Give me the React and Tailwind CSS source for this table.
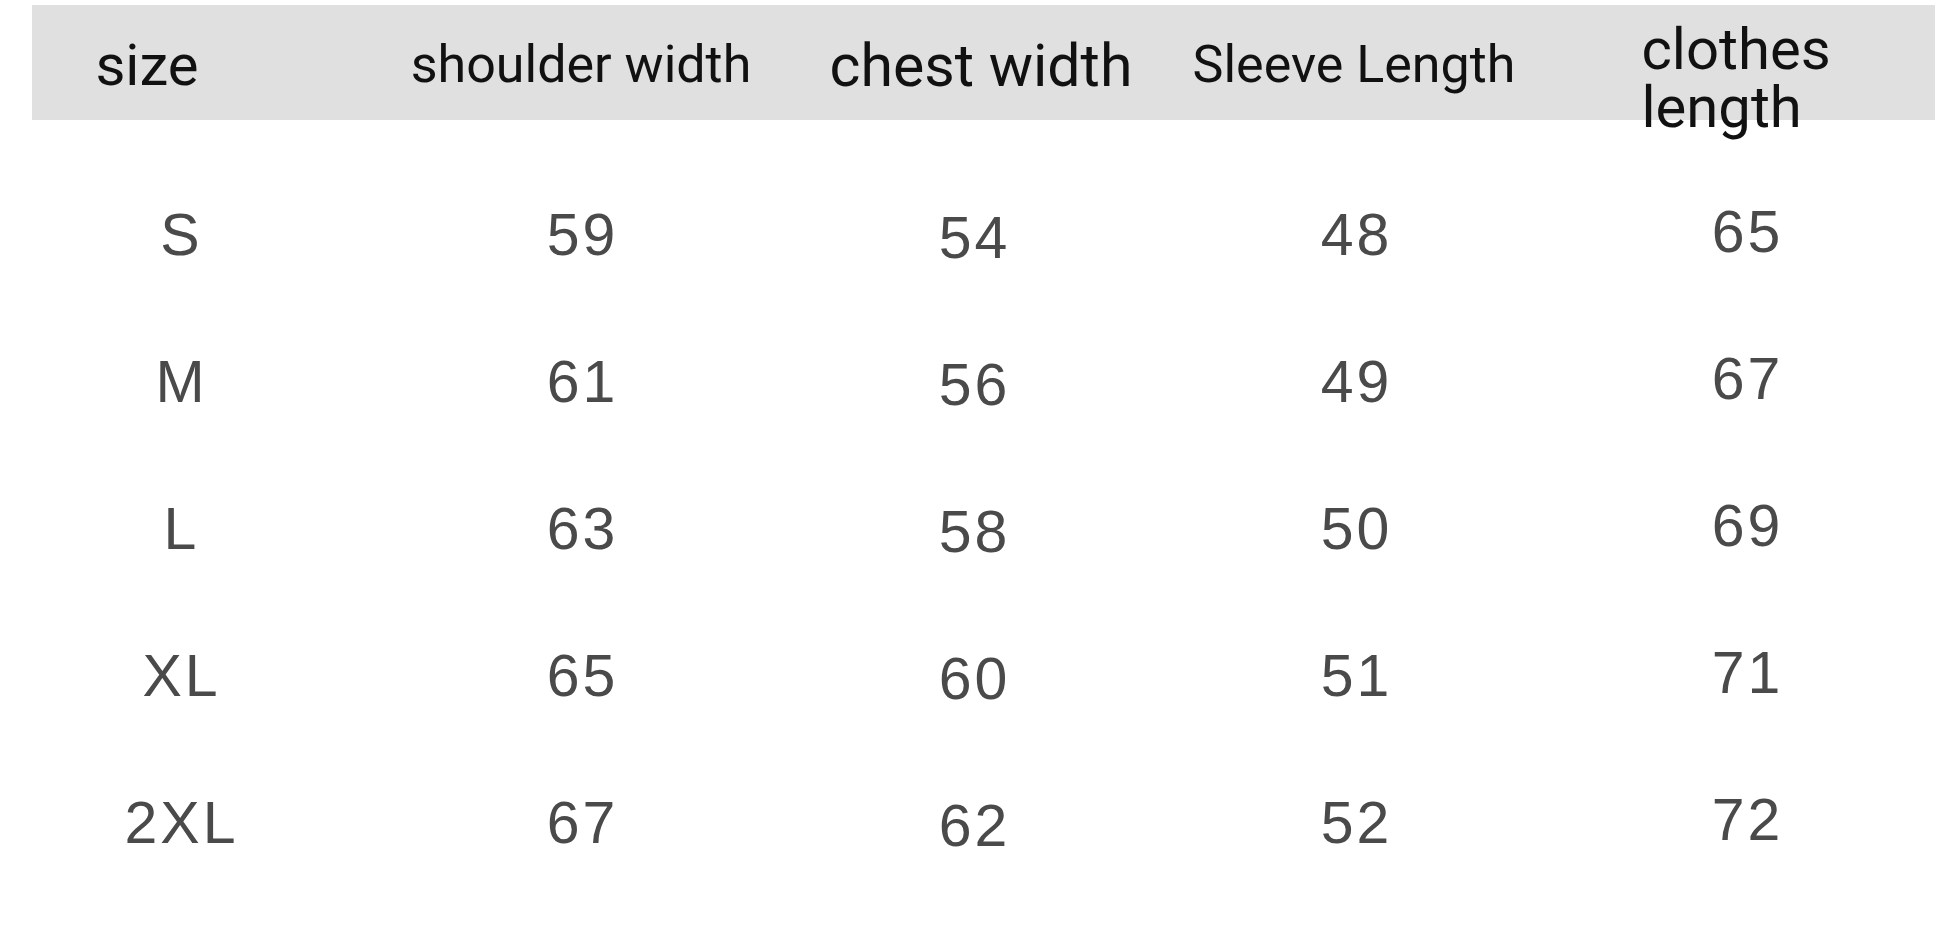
const HEADERS = [
  { label: "size", cls: "text-[58px]" },
  { label: "shoulder width", cls: "text-[52px]" },
  { label: "chest width", cls: "text-[59px]" },
  { label: "Sleeve Length", cls: "text-[52px]" },
];

const ROWS = [
  ["S", "59", "54", "48", "65"],
  ["M", "61", "56", "49", "67"],
  ["L", "63", "58", "50", "69"],
  ["XL", "65", "60", "51", "71"],
  ["2XL", "67", "62", "52", "72"],
];

// small per-column vertical nudges seen in the picture
const NUDGE = ["", "", "pt-[6px]", "", "pb-[6px]"];

function App() {
  return (
    <div className="w-[1946px] h-[925px] bg-white overflow-hidden pt-[5px]">
      {/* header band */}
      <div
        className="ml-[32px] w-[1903px] h-[115px] bg-[#e0e0e0] grid grid-cols-[230px_638px_162px_584px_180px] text-[#111]"
        style={{ fontFamily: "Roboto, 'Noto Sans', sans-serif" }}
      >
        {HEADERS.map((h) => (
          <div key={h.label} className="flex items-center justify-center pb-[11px]">
            <span className={`${h.cls} whitespace-nowrap leading-none`}>{h.label}</span>
          </div>
        ))}
        <div className="flex justify-center pt-[15px]">
          <div className="text-[58px] leading-[58px] whitespace-nowrap">
            clothes
            <br />
            length
          </div>
        </div>
      </div>

      {/* data rows */}
      <div
        className="ml-[31px] mt-[42px] text-[59px] tracking-[3px] text-[#4a4a4a]"
        style={{ fontFamily: "'Liberation Sans', Arial, sans-serif" }}
      >
        {ROWS.map((row) => (
          <div key={row[0]} className="grid grid-cols-[298px_504px_280px_484px_298px] h-[147px]">
            {row.map((v, i) => (
              <div key={i} className={`flex items-center justify-center pl-[3px] ${NUDGE[i]}`}>
                {v}
              </div>
            ))}
          </div>
        ))}
      </div>
    </div>
  );
}

export default App;
